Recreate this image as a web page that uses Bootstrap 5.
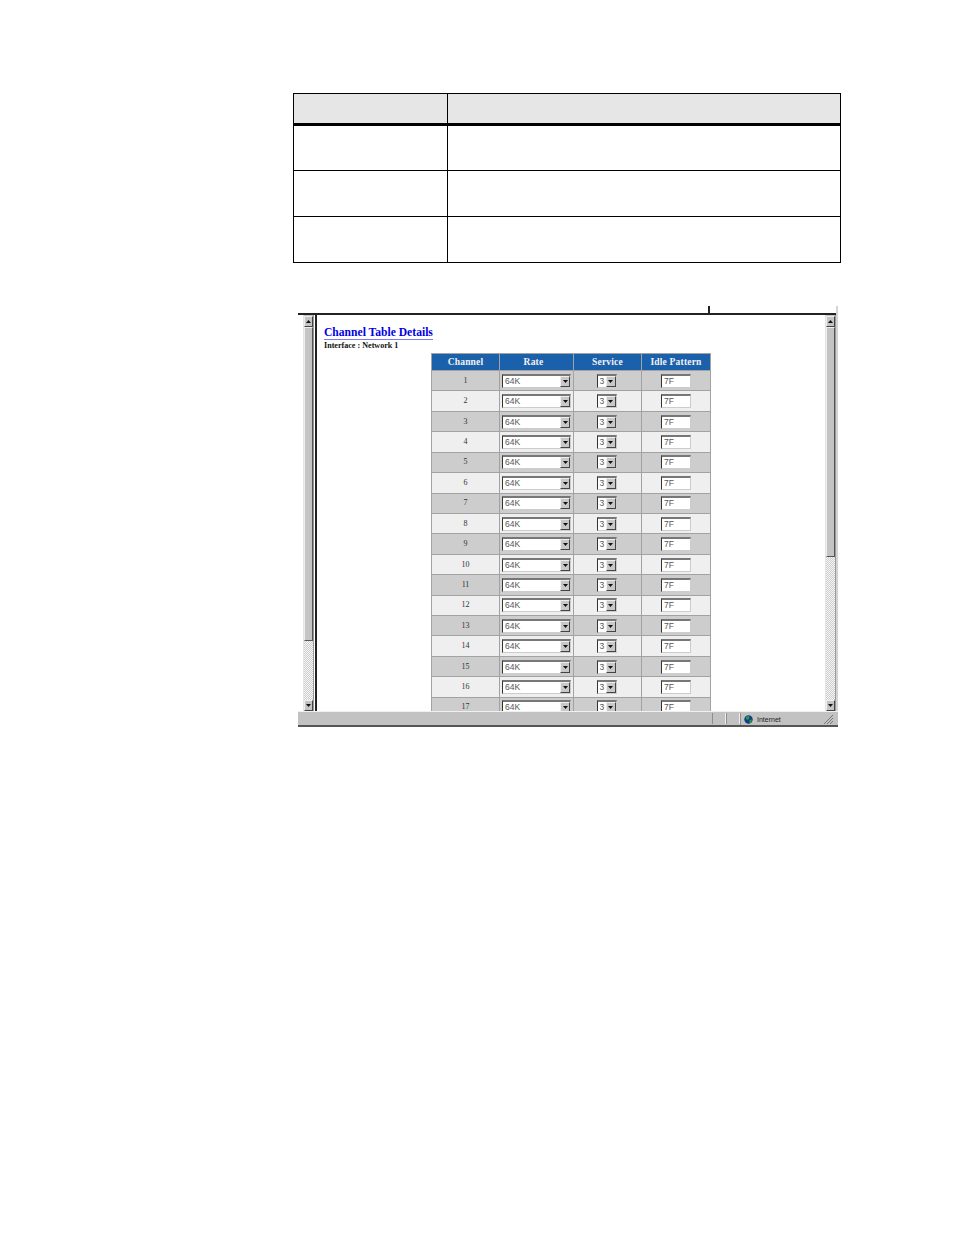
<!DOCTYPE html>
<html lang="en">
<head>
<meta charset="utf-8">
<title>Channel Table Details</title>
<link rel="stylesheet" href="https://cdn.jsdelivr.net/npm/bootstrap@5.3.0/dist/css/bootstrap.min.css">
<style>
body{background:#fff;margin:0;height:1235px;overflow:hidden}
.doc-page{padding:93px 0 0 293px}
.spec-table{width:548px;height:170px;margin:0;table-layout:fixed;border-collapse:collapse;--bs-table-bg:transparent}
.spec-table th,.spec-table td{border:1px solid #000;padding:0}
.spec-table th{background:#e6e6e6;height:31px;border-bottom:3px solid #000}
.spec-table td{height:46px}
.spec-table .first-col{width:154px}
.shot{position:relative;width:540px;margin:50px 0 0 5px;height:414px}
.shot-tick{position:absolute;left:410px;top:-7px;width:2px;height:7px;background:#222}
.shot-edge{position:absolute;left:538px;top:-7px;width:2px;height:405px;background:#d4d4d4}
.shot-main{height:398px;border-top:2px solid #222;width:538px}
.sbar{width:11px;background:#c4c4c4;border-right:1px solid #999;border-left:1px solid #e4e4e4}
.sbar-left{margin-left:5px}
.sbar-right{margin-left:1px}
.sb-btn{height:11px;background:#c4c4c4;border:1px solid;border-color:#eee #444 #444 #eee;flex:none}
.sb-btn svg{display:block;margin:3px auto 0}
.sb-top{margin-top:1px}
.sb-thumb{background:#c4c4c4;border:1px solid;border-color:#eee #555 #555 #eee;flex:none}
.thumb-left{height:314px}
.thumb-right{height:230px}
.sb-track{flex:1 1 auto;background:repeating-conic-gradient(#f6f6f6 0 25%,#cdcdcd 0 50%) 0 0/2px 2px}
.shot-content{width:509px;margin-left:1px;border-left:2px solid #222;overflow:hidden;background:#fff;padding:11px 0 0 7px}
.page-link-title{font:bold 11.6px/13px "Liberation Serif",serif;color:#0000e6;border-bottom:1px solid #7c7cf0;display:table;height:12px}
.iface-line{font:bold 8.1px/10px "Liberation Serif",serif;color:#111;margin-top:1px}
.chan-table{width:280px;table-layout:fixed;border-collapse:separate;border-spacing:1px;background:#a2a2a2;margin:2px 0 0 107px}
.chan-table th{background:#1a60ab;color:#f2f2f2;font:bold 9.5px/1 "Liberation Serif",serif;text-align:center;height:16px;padding:2px 0 0;letter-spacing:.2px}
.chan-table .w-chan{width:67px}
.chan-table .w-rate{width:73px;padding-right:6px}
.chan-table .w-svc{width:67px}
.chan-table td{height:19.43px;padding:0;text-align:center;font:8px/1 "Liberation Serif",serif;color:#333;vertical-align:middle}
.chan-table tr:nth-child(odd) td{background:#cdcdcd}
.chan-table tr:nth-child(even) td{background:#efefef}
.ctl{display:inline-flex;align-items:stretch;height:14px;background:#fff;border-style:solid;border-width:2px 1px 1px;border-color:#777 #ccc #ccc #333;font:8.5px/11px "Liberation Sans",sans-serif;color:#555;text-align:left;vertical-align:middle}
.ctl-val{flex:1 1 auto;padding-left:2px}
.ctl-rate{width:69px}
.ctl-svc{width:20px;margin-right:2px}
.ctl-idle{width:30px}
.ctl-btn{width:10px;background:#c8c8c8;border:1px solid;border-color:#eee #444 #444 #eee;flex:none;display:flex;align-items:center;justify-content:center}
.status-bar{height:16px;width:540px;background:#c2c2c2;border-top:1px solid #f0f0f0;border-bottom:2px solid #555;font:7px/13px "Liberation Sans",sans-serif;color:#222}
.st-fill{flex:1 1 auto}
.st-pane{width:14px;border-left:1px solid #8e8e8e;border-right:1px solid #eee;margin:1px 0}
.st-zone{width:98px;border-left:1px solid #8e8e8e;gap:4px;padding-left:3px;margin-top:1px}
</style>
</head>
<body>
<main class="doc-page">
  <table class="table spec-table">
    <thead><tr><th class="first-col"></th><th></th></tr></thead>
    <tbody>
      <tr><td></td><td></td></tr>
      <tr><td></td><td></td></tr>
      <tr><td></td><td></td></tr>
    </tbody>
  </table>
  <section class="shot">
    <div class="shot-tick"></div>
    <div class="shot-edge"></div>
    <div class="shot-main d-flex">
      <div class="sbar sbar-left d-flex flex-column">
        <div class="sb-btn sb-top"><svg width="5" height="3" viewBox="0 0 5 3"><path d="M2.5 0 5 3H0z" fill="#111"/></svg></div>
        <div class="sb-thumb thumb-left"></div>
        <div class="sb-track"></div>
        <div class="sb-btn"><svg width="5" height="3" viewBox="0 0 5 3"><path d="M0 0h5L2.5 3z" fill="#111"/></svg></div>
      </div>
      <div class="shot-content">
        <a class="page-link-title text-decoration-none" href="#">Channel Table Details</a>
        <div class="iface-line">Interface : Network 1</div>
        <table class="chan-table">
          <thead><tr><th class="w-chan">Channel</th><th class="w-rate">Rate</th><th class="w-svc">Service</th><th>Idle Pattern</th></tr></thead>
          <tbody id="rows">
            <tr><td>1</td><td><span class="ctl ctl-rate"><span class="ctl-val">64K</span><span class="ctl-btn"><svg width="5" height="3" viewBox="0 0 5 3"><path d="M0 0h5L2.5 3z" fill="#111"/></svg></span></span></td><td><span class="ctl ctl-svc"><span class="ctl-val">3</span><span class="ctl-btn"><svg width="5" height="3" viewBox="0 0 5 3"><path d="M0 0h5L2.5 3z" fill="#111"/></svg></span></span></td><td><span class="ctl ctl-idle"><span class="ctl-val">7F</span></span></td></tr>
            <tr><td>2</td><td><span class="ctl ctl-rate"><span class="ctl-val">64K</span><span class="ctl-btn"><svg width="5" height="3" viewBox="0 0 5 3"><path d="M0 0h5L2.5 3z" fill="#111"/></svg></span></span></td><td><span class="ctl ctl-svc"><span class="ctl-val">3</span><span class="ctl-btn"><svg width="5" height="3" viewBox="0 0 5 3"><path d="M0 0h5L2.5 3z" fill="#111"/></svg></span></span></td><td><span class="ctl ctl-idle"><span class="ctl-val">7F</span></span></td></tr>
            <tr><td>3</td><td><span class="ctl ctl-rate"><span class="ctl-val">64K</span><span class="ctl-btn"><svg width="5" height="3" viewBox="0 0 5 3"><path d="M0 0h5L2.5 3z" fill="#111"/></svg></span></span></td><td><span class="ctl ctl-svc"><span class="ctl-val">3</span><span class="ctl-btn"><svg width="5" height="3" viewBox="0 0 5 3"><path d="M0 0h5L2.5 3z" fill="#111"/></svg></span></span></td><td><span class="ctl ctl-idle"><span class="ctl-val">7F</span></span></td></tr>
            <tr><td>4</td><td><span class="ctl ctl-rate"><span class="ctl-val">64K</span><span class="ctl-btn"><svg width="5" height="3" viewBox="0 0 5 3"><path d="M0 0h5L2.5 3z" fill="#111"/></svg></span></span></td><td><span class="ctl ctl-svc"><span class="ctl-val">3</span><span class="ctl-btn"><svg width="5" height="3" viewBox="0 0 5 3"><path d="M0 0h5L2.5 3z" fill="#111"/></svg></span></span></td><td><span class="ctl ctl-idle"><span class="ctl-val">7F</span></span></td></tr>
            <tr><td>5</td><td><span class="ctl ctl-rate"><span class="ctl-val">64K</span><span class="ctl-btn"><svg width="5" height="3" viewBox="0 0 5 3"><path d="M0 0h5L2.5 3z" fill="#111"/></svg></span></span></td><td><span class="ctl ctl-svc"><span class="ctl-val">3</span><span class="ctl-btn"><svg width="5" height="3" viewBox="0 0 5 3"><path d="M0 0h5L2.5 3z" fill="#111"/></svg></span></span></td><td><span class="ctl ctl-idle"><span class="ctl-val">7F</span></span></td></tr>
            <tr><td>6</td><td><span class="ctl ctl-rate"><span class="ctl-val">64K</span><span class="ctl-btn"><svg width="5" height="3" viewBox="0 0 5 3"><path d="M0 0h5L2.5 3z" fill="#111"/></svg></span></span></td><td><span class="ctl ctl-svc"><span class="ctl-val">3</span><span class="ctl-btn"><svg width="5" height="3" viewBox="0 0 5 3"><path d="M0 0h5L2.5 3z" fill="#111"/></svg></span></span></td><td><span class="ctl ctl-idle"><span class="ctl-val">7F</span></span></td></tr>
            <tr><td>7</td><td><span class="ctl ctl-rate"><span class="ctl-val">64K</span><span class="ctl-btn"><svg width="5" height="3" viewBox="0 0 5 3"><path d="M0 0h5L2.5 3z" fill="#111"/></svg></span></span></td><td><span class="ctl ctl-svc"><span class="ctl-val">3</span><span class="ctl-btn"><svg width="5" height="3" viewBox="0 0 5 3"><path d="M0 0h5L2.5 3z" fill="#111"/></svg></span></span></td><td><span class="ctl ctl-idle"><span class="ctl-val">7F</span></span></td></tr>
            <tr><td>8</td><td><span class="ctl ctl-rate"><span class="ctl-val">64K</span><span class="ctl-btn"><svg width="5" height="3" viewBox="0 0 5 3"><path d="M0 0h5L2.5 3z" fill="#111"/></svg></span></span></td><td><span class="ctl ctl-svc"><span class="ctl-val">3</span><span class="ctl-btn"><svg width="5" height="3" viewBox="0 0 5 3"><path d="M0 0h5L2.5 3z" fill="#111"/></svg></span></span></td><td><span class="ctl ctl-idle"><span class="ctl-val">7F</span></span></td></tr>
            <tr><td>9</td><td><span class="ctl ctl-rate"><span class="ctl-val">64K</span><span class="ctl-btn"><svg width="5" height="3" viewBox="0 0 5 3"><path d="M0 0h5L2.5 3z" fill="#111"/></svg></span></span></td><td><span class="ctl ctl-svc"><span class="ctl-val">3</span><span class="ctl-btn"><svg width="5" height="3" viewBox="0 0 5 3"><path d="M0 0h5L2.5 3z" fill="#111"/></svg></span></span></td><td><span class="ctl ctl-idle"><span class="ctl-val">7F</span></span></td></tr>
            <tr><td>10</td><td><span class="ctl ctl-rate"><span class="ctl-val">64K</span><span class="ctl-btn"><svg width="5" height="3" viewBox="0 0 5 3"><path d="M0 0h5L2.5 3z" fill="#111"/></svg></span></span></td><td><span class="ctl ctl-svc"><span class="ctl-val">3</span><span class="ctl-btn"><svg width="5" height="3" viewBox="0 0 5 3"><path d="M0 0h5L2.5 3z" fill="#111"/></svg></span></span></td><td><span class="ctl ctl-idle"><span class="ctl-val">7F</span></span></td></tr>
            <tr><td>11</td><td><span class="ctl ctl-rate"><span class="ctl-val">64K</span><span class="ctl-btn"><svg width="5" height="3" viewBox="0 0 5 3"><path d="M0 0h5L2.5 3z" fill="#111"/></svg></span></span></td><td><span class="ctl ctl-svc"><span class="ctl-val">3</span><span class="ctl-btn"><svg width="5" height="3" viewBox="0 0 5 3"><path d="M0 0h5L2.5 3z" fill="#111"/></svg></span></span></td><td><span class="ctl ctl-idle"><span class="ctl-val">7F</span></span></td></tr>
            <tr><td>12</td><td><span class="ctl ctl-rate"><span class="ctl-val">64K</span><span class="ctl-btn"><svg width="5" height="3" viewBox="0 0 5 3"><path d="M0 0h5L2.5 3z" fill="#111"/></svg></span></span></td><td><span class="ctl ctl-svc"><span class="ctl-val">3</span><span class="ctl-btn"><svg width="5" height="3" viewBox="0 0 5 3"><path d="M0 0h5L2.5 3z" fill="#111"/></svg></span></span></td><td><span class="ctl ctl-idle"><span class="ctl-val">7F</span></span></td></tr>
            <tr><td>13</td><td><span class="ctl ctl-rate"><span class="ctl-val">64K</span><span class="ctl-btn"><svg width="5" height="3" viewBox="0 0 5 3"><path d="M0 0h5L2.5 3z" fill="#111"/></svg></span></span></td><td><span class="ctl ctl-svc"><span class="ctl-val">3</span><span class="ctl-btn"><svg width="5" height="3" viewBox="0 0 5 3"><path d="M0 0h5L2.5 3z" fill="#111"/></svg></span></span></td><td><span class="ctl ctl-idle"><span class="ctl-val">7F</span></span></td></tr>
            <tr><td>14</td><td><span class="ctl ctl-rate"><span class="ctl-val">64K</span><span class="ctl-btn"><svg width="5" height="3" viewBox="0 0 5 3"><path d="M0 0h5L2.5 3z" fill="#111"/></svg></span></span></td><td><span class="ctl ctl-svc"><span class="ctl-val">3</span><span class="ctl-btn"><svg width="5" height="3" viewBox="0 0 5 3"><path d="M0 0h5L2.5 3z" fill="#111"/></svg></span></span></td><td><span class="ctl ctl-idle"><span class="ctl-val">7F</span></span></td></tr>
            <tr><td>15</td><td><span class="ctl ctl-rate"><span class="ctl-val">64K</span><span class="ctl-btn"><svg width="5" height="3" viewBox="0 0 5 3"><path d="M0 0h5L2.5 3z" fill="#111"/></svg></span></span></td><td><span class="ctl ctl-svc"><span class="ctl-val">3</span><span class="ctl-btn"><svg width="5" height="3" viewBox="0 0 5 3"><path d="M0 0h5L2.5 3z" fill="#111"/></svg></span></span></td><td><span class="ctl ctl-idle"><span class="ctl-val">7F</span></span></td></tr>
            <tr><td>16</td><td><span class="ctl ctl-rate"><span class="ctl-val">64K</span><span class="ctl-btn"><svg width="5" height="3" viewBox="0 0 5 3"><path d="M0 0h5L2.5 3z" fill="#111"/></svg></span></span></td><td><span class="ctl ctl-svc"><span class="ctl-val">3</span><span class="ctl-btn"><svg width="5" height="3" viewBox="0 0 5 3"><path d="M0 0h5L2.5 3z" fill="#111"/></svg></span></span></td><td><span class="ctl ctl-idle"><span class="ctl-val">7F</span></span></td></tr>
            <tr><td>17</td><td><span class="ctl ctl-rate"><span class="ctl-val">64K</span><span class="ctl-btn"><svg width="5" height="3" viewBox="0 0 5 3"><path d="M0 0h5L2.5 3z" fill="#111"/></svg></span></span></td><td><span class="ctl ctl-svc"><span class="ctl-val">3</span><span class="ctl-btn"><svg width="5" height="3" viewBox="0 0 5 3"><path d="M0 0h5L2.5 3z" fill="#111"/></svg></span></span></td><td><span class="ctl ctl-idle"><span class="ctl-val">7F</span></span></td></tr>
          </tbody>
        </table>
      </div>
      <div class="sbar sbar-right d-flex flex-column">
        <div class="sb-btn sb-top"><svg width="5" height="3" viewBox="0 0 5 3"><path d="M2.5 0 5 3H0z" fill="#111"/></svg></div>
        <div class="sb-thumb thumb-right"></div>
        <div class="sb-track"></div>
        <div class="sb-btn"><svg width="5" height="3" viewBox="0 0 5 3"><path d="M0 0h5L2.5 3z" fill="#111"/></svg></div>
      </div>
    </div>
    <footer class="status-bar d-flex">
      <div class="st-fill"></div>
      <div class="st-pane"></div>
      <div class="st-pane"></div>
      <div class="st-zone d-flex align-items-center">
        <svg width="9" height="9" viewBox="0 0 9 9"><circle cx="4.5" cy="4.5" r="4.2" fill="#0f3f8a"/><path d="M2 1.5 5 1 5.5 3 4 5 2 4zM5.5 5 8 4.5 7 8 5.5 8z" fill="#2f9a3a"/></svg>
        <span>Internet</span>
        <svg class="ms-auto me-1" width="11" height="11" viewBox="0 0 11 11"><path d="M10 1 1 10M10 4 4 10M10 7 7 10" stroke="#777" fill="none"/></svg>
      </div>
    </footer>
  </section>
</main>
<script src="https://cdn.jsdelivr.net/npm/bootstrap@5.3.0/dist/js/bootstrap.bundle.min.js"></script>
</body>
</html>
